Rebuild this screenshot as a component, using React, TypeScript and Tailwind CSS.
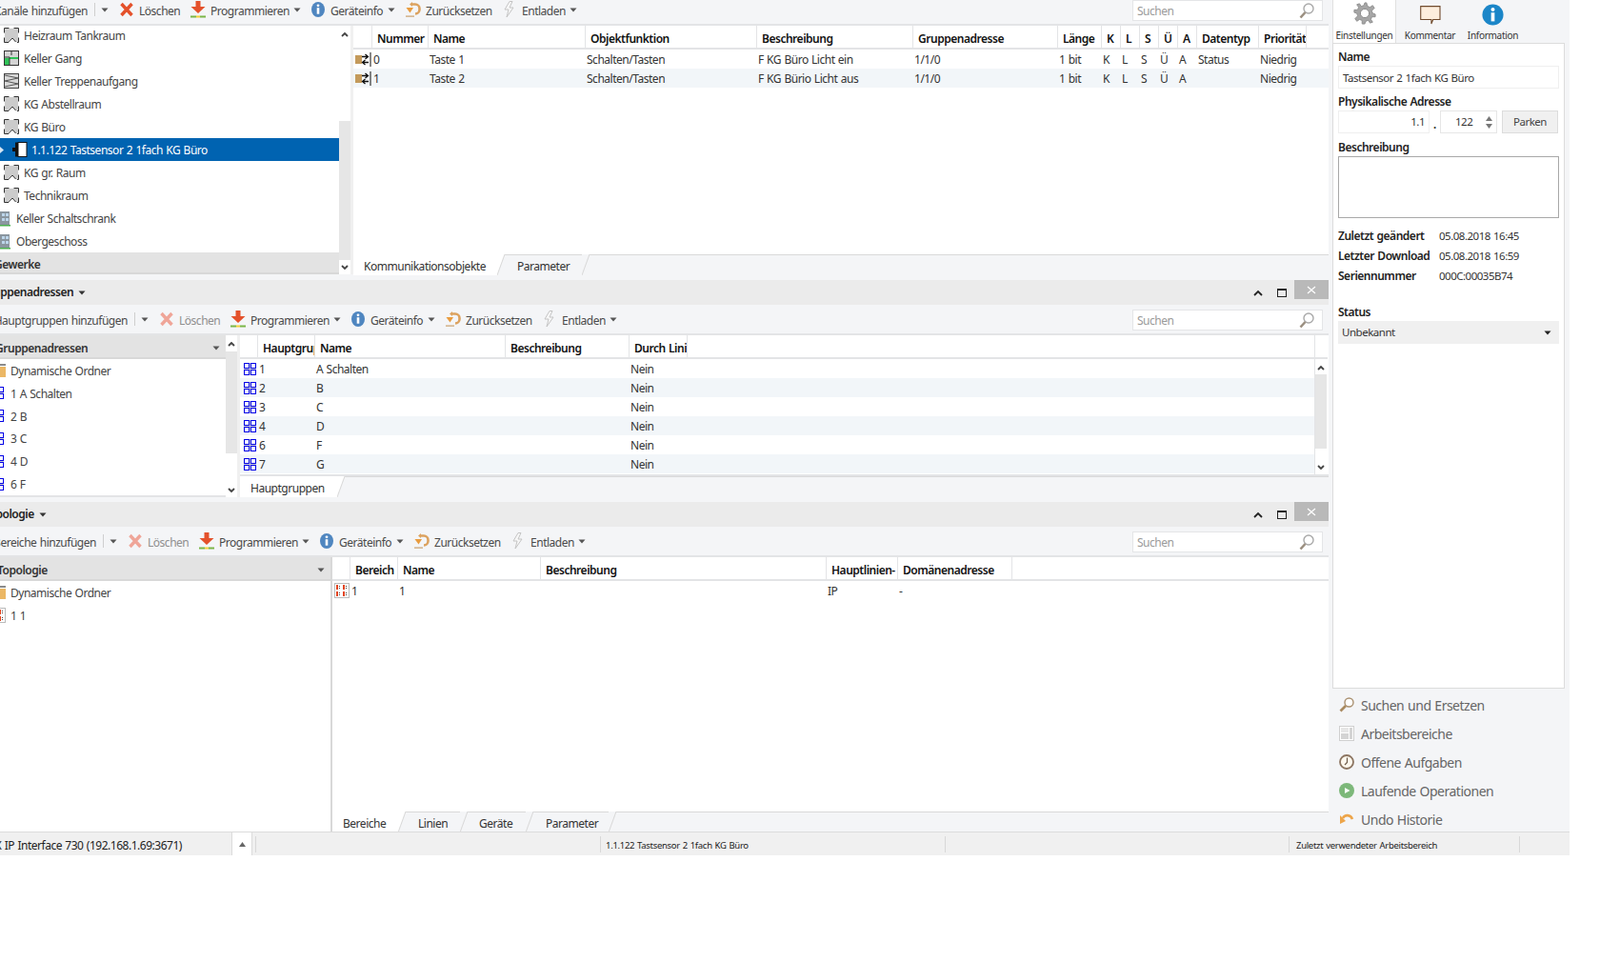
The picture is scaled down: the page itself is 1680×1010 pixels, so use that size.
import React from "react";

const Caret = ({ c = "#555" }: { c?: string }) => (
  <svg width="8" height="5" viewBox="0 0 8 5" className="shrink-0"><polygon points="0.5,0.5 7.5,0.5 4,4.5" fill={c} /></svg>
);
const Chev = ({ up }: { up?: boolean }) => (
  <svg width="8" height="6" viewBox="0 0 8 6" className="shrink-0">
    <polyline points={up ? "1,5 4,2 7,5" : "1,1 4,4 7,1"} fill="none" stroke="#444" strokeWidth="1.8" />
  </svg>
);
const XIcon = ({ c }: { c: string }) => (
  <svg width="14" height="16" viewBox="0 0 14 16"><path d="M1.5 2 L12.5 14 M12.5 2 L1.5 14" stroke={c} strokeWidth="3.4" /></svg>
);
const ProgIcon = () => (
  <svg width="16" height="19" viewBox="0 0 16 19">
    <path d="M5.5 0h5v6h5l-7.500 7-7.500-7h5z" fill="#e4512b" />
    <rect x="0" y="15.500" width="6" height="2" fill="#7ab648" />
    <rect x="6" y="15.500" width="4" height="2" fill="#f2d13c" />
    <rect x="10" y="15.500" width="6" height="2" fill="#7ab648" />
  </svg>
);
const InfoIcon = () => (
  <svg width="14" height="16" viewBox="0 0 14 16">
    <ellipse cx="7" cy="8" rx="7" ry="8" fill="#4f86c0" />
    <circle cx="7" cy="3.800" r="1.400" fill="#fff" />
    <rect x="5.700" y="6.200" width="2.600" height="6.500" fill="#fff" />
  </svg>
);
const ResetIcon = () => (
  <svg width="16" height="18" viewBox="0 0 16 18">
    <path d="M6 3.500h4a4.500 4.500 0 0 1 4.500 4.500v1a4.500 4.500 0 0 1-4.500 4.500" fill="none" stroke="#dca25f" strokeWidth="2.600" />
    <path d="M0.500 7h7.500l-3.500 5.500z" fill="#e99c3f" />
    <path d="M7 1l-3 2.500 3 2.500z" fill="#dca25f" />
    <rect x="0" y="15.500" width="9" height="1.200" fill="#c9a06c" />
  </svg>
);
const BoltIcon = () => (
  <svg width="11" height="18" viewBox="0 0 11 18"><path d="M6 0.500 L1 9 H5 L3 17 L10 7 H6 L9 0.500 Z" fill="#f7f7f7" stroke="#c4c4c4" /></svg>
);
const SearchIcon = () => (
  <svg width="16" height="17" viewBox="0 0 16 17">
    <circle cx="10" cy="6" r="5" fill="#fff" stroke="#a9a9a9" strokeWidth="1.400" />
    <path d="M6.500 10 L1.500 15.500" stroke="#9b8f80" strokeWidth="2.600" />
  </svg>
);
const Room = () => (
  <svg width="16" height="16" viewBox="0 0 16 16">
    <rect x="1" y="1" width="14" height="14" fill="#cbcbcb" />
    <path d="M0.500 5.500V0.500H5.500 M10.500 0.500H15.500V5.500 M15.500 10.500V15.500H14 M0.500 10.500V15.500H5 L9 11 L12.500 15" fill="none" stroke="#333" />
    <path d="M5.500 15.500 L9 11.800 L12 15.500Z" fill="#fff" />
  </svg>
);
const RoomGreen = () => (
  <svg width="16" height="16" viewBox="0 0 16 16">
    <rect x="0.500" y="0.500" width="15" height="15" fill="#d4d4d4" stroke="#333" />
    <rect x="1" y="8" width="5" height="7" fill="#2fc257" />
    <rect x="6" y="7" width="9" height="2" fill="#2fc257" />
    <path d="M8 0.500V5 M0.500 7H6 M6 7V15" stroke="#333" fill="none" />
  </svg>
);
const RoomStairs = () => (
  <svg width="16" height="16" viewBox="0 0 16 16">
    <rect x="0.500" y="0.500" width="15" height="15" fill="#d8d8d8" stroke="#444" />
    <path d="M1 2 L15 5 L1 8 L15 11 L1 14" fill="none" stroke="#555" />
  </svg>
);
const Device = () => (
  <svg width="16" height="16" viewBox="0 0 16 16">
    <rect x="0" y="6" width="3" height="4" fill="#111" />
    <rect x="3" y="0.500" width="6" height="15" fill="#111" />
    <rect x="6" y="0.500" width="9" height="15" fill="#fff" stroke="#111" />
  </svg>
);
const Building = () => (
  <svg width="11" height="17" viewBox="0 0 11 17" className="shrink-0">
    <rect x="0" y="1" width="10" height="14" fill="#8a969f" />
    <rect x="2" y="3" width="3" height="3" fill="#bcd5ea" />
    <rect x="6" y="3" width="3" height="3" fill="#bcd5ea" />
    <rect x="2" y="8" width="3" height="3" fill="#bcd5ea" />
    <rect x="6" y="8" width="3" height="3" fill="#bcd5ea" />
    <rect x="0" y="15" width="11" height="1.500" fill="#4caf50" />
  </svg>
);
const GroupIcon = () => (
  <svg width="13" height="13" viewBox="0 0 13 13" className="shrink-0">
    <rect width="13" height="13" fill="#c9ccd6" />
    <rect x="0.500" y="0.500" width="5" height="5" fill="#fff" stroke="#0000e6" />
    <rect x="7.500" y="0.500" width="5" height="5" fill="#fff" stroke="#0000e6" />
    <rect x="0.500" y="7.500" width="5" height="5" fill="#fff" stroke="#0000e6" />
    <rect x="7.500" y="7.500" width="5" height="5" fill="#fff" stroke="#0000e6" />
  </svg>
);
const AreaIcon = () => (
  <svg width="16" height="16" viewBox="0 0 16 16" className="shrink-0">
    <rect x="0.500" y="0.500" width="15" height="15" fill="#fff" stroke="#bbb" />
    <rect x="2" y="2" width="2" height="5" fill="#e2431c" /><rect x="5" y="3" width="1" height="1" fill="#444" /><rect x="5" y="5" width="1" height="1" fill="#444" />
    <rect x="9" y="2" width="2" height="5" fill="#e2431c" /><rect x="12" y="3" width="1" height="1" fill="#444" /><rect x="12" y="5" width="1" height="1" fill="#444" />
    <rect x="2" y="9" width="2" height="5" fill="#e2431c" /><rect x="5" y="10" width="1" height="1" fill="#444" /><rect x="5" y="12" width="1" height="1" fill="#444" />
    <rect x="9" y="9" width="2" height="5" fill="#e2431c" /><rect x="12" y="10" width="1" height="1" fill="#444" /><rect x="12" y="12" width="1" height="1" fill="#444" />
  </svg>
);
const Folder = () => (
  <svg width="6" height="14" viewBox="0 0 6 14" className="shrink-0">
    <rect x="0" y="0" width="6" height="2" fill="#8a8a8a" />
    <rect x="0" y="3" width="6" height="11" fill="#ebb765" />
  </svg>
);
const ObjIcon = () => (
  <svg width="17" height="15" viewBox="0 0 17 15" className="shrink-0">
    <rect x="0" y="3" width="7" height="9" fill="#c49a5b" />
    <path d="M7 4.500H13 M10.500 2L13.500 4.500L10.500 7" fill="none" stroke="#111" strokeWidth="1.300" />
    <path d="M14 10.500H8 M10.500 8L7.500 10.500L10.500 13" fill="none" stroke="#111" strokeWidth="1.300" />
    <rect x="15.500" y="0" width="1" height="15" fill="#111" />
  </svg>
);

const Toolbar = ({ label, labelClass, del }: { label: string; labelClass: string; del: string }) => (
  <div className="flex h-[32px] shrink-0 items-center border-b-2 border-[#e3e4e6] pt-[3px] text-[#4a4a4a]">
    <div className={`flex shrink-0 justify-end whitespace-nowrap pr-[7px] ${labelClass}`}>{label}</div>
    <div className="-mt-[3px] h-[14px] w-px shrink-0 bg-[#cfcfcf]" />
    <div className="-mt-[3px] flex w-[26px] shrink-0 pl-[6px]"><Caret /></div>
    <div className="flex w-[74px] shrink-0 items-center">
      <span className="-mt-[3px] flex"><XIcon c={del} /></span>
      <span className={`ml-[6px] ${del === "#e4512b" ? "" : "text-[#8f8f8f]"}`}>Löschen</span>
    </div>
    <div className="flex w-[127px] shrink-0 items-center">
      <span className="-mt-[3px] flex"><ProgIcon /></span>
      <span className="ml-[5px] w-[87px] whitespace-nowrap">Programmieren</span>
      <span className="-mt-[3px] flex"><Caret /></span>
    </div>
    <div className="flex w-[99px] shrink-0 items-center">
      <span className="-mt-[3px] flex"><InfoIcon /></span>
      <span className="ml-[6px] w-[60px] whitespace-nowrap">Geräteinfo</span>
      <span className="-mt-[3px] flex"><Caret /></span>
    </div>
    <div className="flex w-[103px] shrink-0 items-center">
      <span className="-mt-[3px] flex"><ResetIcon /></span>
      <span className="ml-[5px] whitespace-nowrap">Zurücksetzen</span>
    </div>
    <div className="flex w-[90px] shrink-0 items-center">
      <span className="-mt-[3px] flex"><BoltIcon /></span>
      <span className="ml-[8px] w-[50px] whitespace-nowrap">Entladen</span>
      <span className="-mt-[3px] flex"><Caret /></span>
    </div>
    <div className="flex-1" />
    <div className="-mt-[1px] mr-[6px] flex h-[22px] w-[200px] items-center justify-between border border-[#e4e5e7] bg-white pl-[4px] pr-[8px] text-[#9a9a9a]">
      <span className="pt-px">Suchen</span>
      <SearchIcon />
    </div>
  </div>
);

const SectionHead = ({ title, titleClass }: { title: string; titleClass: string }) => (
  <div className="flex h-[26px] shrink-0 items-center bg-[#ebebeb]">
    <span className={`whitespace-nowrap font-semibold text-[#222] ${titleClass}`}>{title}</span>
    <span className="ml-[5px]"><Caret c="#333" /></span>
    <div className="flex-1" />
    <svg width="10" height="7" viewBox="0 0 10 7" className="mr-[15px]"><polyline points="1,6 5,2 9,6" fill="none" stroke="#222" strokeWidth="1.800" /></svg>
    <div className="mr-[8px] h-[9px] w-[10px] border border-t-2 border-[#222]" />
    <div className="flex h-[20px] w-[36px] items-center justify-center self-start bg-[#b9b9b9]">
      <svg width="10" height="9" viewBox="0 0 10 9"><path d="M1 1L9 8M9 1L1 8" stroke="#fff" strokeWidth="1.200" /></svg>
    </div>
  </div>
);

const Scrollbar = ({ top, thumb }: { top: string; thumb: string }) => (
  <div className="flex h-full w-[12px] shrink-0 flex-col bg-white">
    <div className={`flex justify-center pt-[6px] ${top}`}><Chev up /></div>
    <div className={`bg-[#e6e6e6] ${thumb}`} />
    <div className="flex flex-1 items-end justify-center pb-[4px]"><Chev /></div>
  </div>
);

const Slant = ({ active }: { active?: boolean }) => (
  <svg width="8" height="21" viewBox="0 0 8 21" preserveAspectRatio="none" className="h-full shrink-0">
    {active && <polygon points="0,0 8,0 0,21" fill="#fff" />}
    <line x1="0" y1="21" x2="8" y2="0" stroke="#d9d9d9" />
  </svg>
);

const TabBar = ({ items }: { items: { label: string; cls: string }[] }) => (
  <div className="flex flex-1 text-[#333]">
    {items.map((t, i) => (
      <React.Fragment key={t.label}>
        <div className={`flex items-center whitespace-nowrap pt-[3px] ${t.cls} ${i === 0 ? "bg-white" : "border-t border-[#d9d9d9]"}`}>{t.label}</div>
        <Slant active={i === 0} />
      </React.Fragment>
    ))}
    <div className="flex-1 border-t border-[#d9d9d9]" />
  </div>
);

const Head = ({ cols, labels }: { cols: string; labels: string[] }) => (
  <div className={`grid h-[25px] shrink-0 border-b-2 border-[#e3e4e6] bg-white font-semibold text-[#111] ${cols}`}>
    {labels.map((l, i) => (
      <div key={i} className="flex items-center overflow-hidden whitespace-nowrap border-r border-[#e3e4e6] pl-[5px] pt-[4px]">{l}</div>
    ))}
    <div />
  </div>
);

const Row = ({ cols, cells, odd, icon, iconClass }: { cols: string; cells: string[]; odd: boolean; icon: React.ReactNode; iconClass: string }) => (
  <div className={`grid h-[20px] items-center text-[#333] ${cols} ${odd ? "bg-[#f2f6f9]" : "bg-white"}`}>
    <div className={`flex ${iconClass}`}>{icon}</div>
    {cells.map((c, i) => (
      <div key={i} className="h-[20px] overflow-hidden whitespace-nowrap pl-px pt-[2px]">{c}</div>
    ))}
  </div>
);

const TreeRow = ({ icon, label, textClass }: { icon: React.ReactNode; label: string; textClass: string }) => (
  <div className="flex h-[24px] items-center text-[#444]">
    {icon}
    <span className={`whitespace-nowrap pt-[2px] ${textClass}`}>{label}</span>
  </div>
);

const cols1 = "grid-cols-[20px_59px_165px_180px_164px_152px_46px_20px_20px_20px_20px_20px_65px_50px_1fr]";
const cols2 = "grid-cols-[19px_60px_200px_130px_61px_1fr]";
const cols3 = "grid-cols-[19px_50px_150px_300px_75px_120px_1fr]";

const Lbl = ({ children }: { children: React.ReactNode }) => (
  <div className="flex h-[16px] items-center font-semibold text-[#222]">{children}</div>
);

const Info = ({ k, v }: { k: string; v: string }) => (
  <div className="flex h-[21px] items-center">
    <span className="w-[105px] shrink-0 whitespace-nowrap font-semibold text-[#222]">{k}</span>
    <span className="pl-px text-[11.500px] tracking-[-0.5px] text-[#333]">{v}</span>
  </div>
);

const SideItem = ({ icon, label }: { icon: React.ReactNode; label: string }) => (
  <div className="flex h-[30px] shrink-0 items-center text-[14px] tracking-[-0.5px] text-[#666]">
    <span className="flex w-[23px] shrink-0">{icon}</span>
    <span className="whitespace-nowrap">{label}</span>
  </div>
);

export default function App() {
  return (
    <div className="h-[1010px] w-[1680px] overflow-hidden bg-white font-['Open_Sans',sans-serif] text-[12px] tracking-[-0.48px] [word-spacing:0.7px]">
      <div className="flex h-[898px] w-[1648px] flex-col overflow-hidden bg-[#f4f5f7]">
        <div className="flex h-[873px] shrink-0">
          {/* left */}
          <div className="flex h-full w-[1395px] shrink-0 flex-col">
            {/* section 1 */}
            <div className="-mt-[5px]">
              <Toolbar label="Kanäle hinzufügen" labelClass="w-[99px]" del="#e4512b" />
            </div>
            <div className="flex h-[261px] shrink-0">
              <div className="flex h-full w-[356px] shrink-0 flex-col overflow-hidden bg-white">
                <div className="-mt-[2px] flex-1">
                  <TreeRow icon={<span className="ml-[4px] flex"><Room /></span>} label="Heizraum Tankraum" textClass="ml-[5px]" />
                  <TreeRow icon={<span className="ml-[4px] flex"><RoomGreen /></span>} label="Keller Gang" textClass="ml-[5px]" />
                  <TreeRow icon={<span className="ml-[4px] flex"><RoomStairs /></span>} label="Keller Treppenaufgang" textClass="ml-[5px]" />
                  <TreeRow icon={<span className="ml-[4px] flex"><Room /></span>} label="KG Abstellraum" textClass="ml-[5px]" />
                  <TreeRow icon={<span className="ml-[4px] flex"><Room /></span>} label="KG Büro" textClass="ml-[5px]" />
                  <div className="flex h-[24px] items-center bg-[#0063b1] text-white">
                    <svg width="4" height="7" viewBox="0 0 4 7" className="shrink-0"><polygon points="0,0 4,3.500 0,7" fill="#d6e6f3" /></svg>
                    <span className="ml-[9px] flex"><Device /></span>
                    <span className="ml-[4px] whitespace-nowrap pt-[2px]">1.1.122 Tastsensor 2 1fach KG Büro</span>
                  </div>
                  <TreeRow icon={<span className="ml-[4px] flex"><Room /></span>} label="KG gr. Raum" textClass="ml-[5px]" />
                  <TreeRow icon={<span className="ml-[4px] flex"><Room /></span>} label="Technikraum" textClass="ml-[5px]" />
                  <TreeRow icon={<Building />} label="Keller Schaltschrank" textClass="ml-[6px]" />
                  <TreeRow icon={<Building />} label="Obergeschoss" textClass="ml-[6px]" />
                </div>
                <div className="flex h-[23px] shrink-0 items-center justify-end border-b-2 border-[#d8d8d8] bg-[#e3e3e3] pt-[4px] font-semibold text-[#333]">
                  <span className="mr-auto -ml-[6px] whitespace-nowrap">Gewerke</span>
                </div>
              </div>
              <Scrollbar top="h-[100px]" thumb="h-[146px]" />
              <div className="w-[3px] shrink-0 bg-[#f0f0f0]" />
              <div className="flex min-w-0 flex-1 flex-col">
                <div className="flex h-[240px] shrink-0 flex-col bg-white">
                  <Head cols={cols1} labels={["", "Nummer", "Name", "Objektfunktion", "Beschreibung", "Gruppenadresse", "Länge", "K", "L", "S", "Ü", "A", "Datentyp", "Priorität"]} />
                  <Row cols={cols1} odd={false} iconClass="pl-[2px]" icon={<ObjIcon />} cells={["0", "Taste 1", "Schalten/Tasten", "F KG Büro Licht ein", "1/1/0", "1 bit", "K", "L", "S", "Ü", "A", "Status", "Niedrig"]} />
                  <Row cols={cols1} odd iconClass="pl-[2px]" icon={<ObjIcon />} cells={["1", "Taste 2", "Schalten/Tasten", "F KG Bürio Licht aus", "1/1/0", "1 bit", "K", "L", "S", "Ü", "A", "", "Niedrig"]} />
                </div>
                <TabBar items={[{ label: "Kommunikationsobjekte", cls: "w-[151px] pl-[11px]" }, { label: "Parameter", cls: "w-[81px] pl-[13px]" }]} />
              </div>
            </div>

            {/* section 2 */}
            <div className="mt-[6px]">
              <SectionHead title="Gruppenadressen" titleClass="-ml-[20px]" />
            </div>
            <Toolbar label="Hauptgruppen hinzufügen" labelClass="w-[141px]" del="#efa598" />
            <div className="flex h-[170px] shrink-0">
              <div className="flex h-full w-[237px] shrink-0 flex-col overflow-hidden border-b-2 border-[#e3e4e6] bg-white">
                <div className="flex h-[25px] shrink-0 items-center justify-between border-b-2 border-[#d8d8d8] bg-[#e3e3e3] pr-[6px] pt-[4px] font-semibold text-[#333]">
                  <span className="-ml-[5px]">Gruppenadressen</span><Caret />
                </div>
                <TreeRow icon={<Folder />} label="Dynamische Ordner" textClass="ml-[5px]" />
                {["1 A Schalten", "2 B", "3 C", "4 D", "6 F"].map((t) => (
                  <TreeRow key={t} icon={<span className="-ml-[9px] flex"><GroupIcon /></span>} label={t} textClass="ml-[7px]" />
                ))}
              </div>
              <Scrollbar top="h-[17px]" thumb="h-[107px]" />
              <div className="w-[3px] shrink-0 bg-[#f0f0f0]" />
              <div className="flex min-w-0 flex-1 flex-col">
                <div className="flex h-[148px] shrink-0 border-b-2 border-[#e3e4e6] bg-white">
                  <div className="flex w-[1128px] shrink-0 flex-col">
                    <Head cols={cols2} labels={["", "Hauptgruppe", "Name", "Beschreibung", "Durch Linie"]} />
                    {[["1", "A Schalten"], ["2", "B"], ["3", "C"], ["4", "D"], ["6", "F"], ["7", "G"]].map(([n, name], i) => (
                      <Row key={n} cols={cols2} odd={i % 2 === 1} iconClass="pl-[4px]" icon={<GroupIcon />} cells={[n, name, "", "Nein"]} />
                    ))}
                  </div>
                  <div className="flex w-[14px] shrink-0 flex-col border-l border-[#e3e4e6]">
                    <div className="h-[25px] shrink-0 border-b-2 border-[#e3e4e6]" />
                    <div className="min-h-0 flex-1">
                      <Scrollbar top="h-[16px]" thumb="h-[78px]" />
                    </div>
                  </div>
                </div>
                <TabBar items={[{ label: "Hauptgruppen", cls: "w-[102px] pl-[11px]" }]} />
              </div>
            </div>

            {/* section 3 */}
            <div className="mt-[5px]">
              <SectionHead title="Topologie" titleClass="-ml-[17px]" />
            </div>
            <Toolbar label="Bereiche hinzufügen" labelClass="w-[108px]" del="#efa598" />
            <div className="flex min-h-0 flex-1">
              <div className="flex h-full w-[347px] shrink-0 flex-col overflow-hidden bg-white">
                <div className="flex h-[25px] shrink-0 items-center justify-between border-b-2 border-[#d8d8d8] bg-[#e3e3e3] pr-[6px] pt-[4px] font-semibold text-[#333]">
                  <span className="-ml-[3px]">Topologie</span><Caret />
                </div>
                <TreeRow icon={<Folder />} label="Dynamische Ordner" textClass="ml-[5px]" />
                <TreeRow icon={<span className="-ml-[10px] flex"><AreaIcon /></span>} label="1 1" textClass="ml-[5px]" />
              </div>
              <div className="w-[2px] shrink-0 bg-[#d8d8d8]" />
              <div className="flex min-w-0 flex-1 flex-col">
                <div className="flex h-[267px] shrink-0 flex-col bg-white">
                  <Head cols={cols3} labels={["", "Bereich", "Name", "Beschreibung", "Hauptlinien-", "Domänenadresse"]} />
                  <Row cols={cols3} odd={false} iconClass="pl-[2px]" icon={<AreaIcon />} cells={["1", "1", "", "IP", "-"]} />
                </div>
                <TabBar items={[{ label: "Bereiche", cls: "w-[69px] pl-[11px]" }, { label: "Linien", cls: "w-[57px] pl-[13px]" }, { label: "Geräte", cls: "w-[61px] pl-[12px]" }, { label: "Parameter", cls: "w-[79px] pl-[13px]" }]} />
              </div>
            </div>
          </div>

          {/* right */}
          <div className="flex h-full w-[253px] shrink-0 flex-col pl-[4px] pr-[5px]">
            <div className="flex h-[45px] shrink-0 items-stretch text-[10px] tracking-[-0.3px] text-[#333]">
              <div className="flex w-[67px] flex-col items-center border-l border-r border-[#e0e0e0] bg-white pt-[2px]">
                <svg width="26" height="26" viewBox="0 0 26 26">
                  <path d="M13 1 L15 1 L16 5 L19 6 L22 4 L24 7 L21 10 L22 13 L25 14 L25 17 L21 17 L20 20 L22 23 L19 24 L17 21 L14 22 L13 25 L10 25 L10 21 L7 20 L4 22 L2 19 L5 16 L4 13 L1 12 L1 9 L5 9 L6 6 L4 3 L7 2 L9 5 L12 4 Z" fill="#a6a6a6" stroke="#8d8d8d" />
                  <circle cx="13" cy="13" r="5" fill="#fff" stroke="#888" />
                </svg>
                <span className="mt-[4px] whitespace-nowrap">Einstellungen</span>
              </div>
              <div className="flex w-[71px] flex-col items-center pt-[6px]">
                <svg width="24" height="22" viewBox="0 0 24 22"><path d="M0.700 0.700H23V16H15L13 21V16H0.700Z" fill="#fdeedd" stroke="#6f4a2c" strokeWidth="1.200" /></svg>
                <span className="mt-[4px] whitespace-nowrap">Kommentar</span>
              </div>
              <div className="flex w-[61px] flex-col items-center pt-[4px]">
                <svg width="25" height="25" viewBox="0 0 25 25">
                  <circle cx="12.500" cy="12.500" r="12" fill="#1b86c8" />
                  <circle cx="12.500" cy="6.500" r="2.200" fill="#fff" />
                  <rect x="10.500" y="10" width="4" height="10" fill="#fff" />
                </svg>
                <span className="mt-[3px] whitespace-nowrap">Information</span>
              </div>
            </div>
            <div className="h-[678px] shrink-0 border border-[#dcdcdc] bg-white pl-[5px] pr-[5px] pt-[6px] text-[#333]">
              <Lbl>Name</Lbl>
              <div className="mt-px flex h-[24px] items-center border border-[#efefef] pl-[4px] pt-[2px] text-[11.500px]">Tastsensor 2 1fach KG Büro</div>
              <div className="mt-[6px]"><Lbl>Physikalische Adresse</Lbl></div>
              <div className="mt-px flex h-[24px] text-[11.500px]">
                <div className="flex w-[96px] items-center justify-end border border-[#efefef] pr-[4px]">1.1</div>
                <div className="flex w-[11px] items-end justify-center pb-[1px] font-bold">.</div>
                <div className="flex w-[60px] items-center border border-[#e6e6e6] pl-[15px]">
                  <span className="w-[32px]">122</span>
                  <div className="flex flex-col gap-[3px]">
                    <svg width="7" height="5" viewBox="0 0 7 5"><polygon points="3.500,0 7,5 0,5" fill="#777" /></svg>
                    <svg width="7" height="5" viewBox="0 0 7 5"><polygon points="0,0 7,0 3.500,5" fill="#777" /></svg>
                  </div>
                </div>
                <div className="ml-[5px] flex w-[59px] items-center justify-center border border-[#dcdcdc] bg-[#f0f0f0] text-[#444]">Parken</div>
              </div>
              <div className="mt-[7px]"><Lbl>Beschreibung</Lbl></div>
              <div className="mt-px h-[65px] border border-[#a8a8a8]" />
              <div className="mt-[8px]">
                <Info k="Zuletzt geändert" v="05.08.2018 16:45" />
                <Info k="Letzter Download" v="05.08.2018 16:59" />
                <Info k="Seriennummer" v="000C:00035B74" />
              </div>
              <div className="mt-[20px]"><Lbl>Status</Lbl></div>
              <div className="mt-px flex h-[24px] items-center justify-between bg-[#f0f0f0] pl-[4px] pr-[8px] text-[11.500px]">
                <span>Unbekannt</span><Caret c="#222" />
              </div>
            </div>
            <div className="mt-[2px] flex flex-col pl-[7px]">
              <SideItem label="Suchen und Ersetzen" icon={<svg width="16" height="16" viewBox="0 0 16 16"><circle cx="10.500" cy="5.500" r="4.500" fill="#fff" stroke="#a99070" strokeWidth="1.400" /><path d="M7 9L1.500 14.500" stroke="#a98a60" strokeWidth="2.600" /></svg>} />
              <SideItem label="Arbeitsbereiche" icon={<svg width="16" height="16" viewBox="0 0 16 16"><rect x="0.500" y="0.500" width="15" height="15" fill="#fff" stroke="#cfcfcf" /><rect x="2" y="2" width="8" height="5" fill="#e6e6e6" /><rect x="2" y="8" width="8" height="6" fill="#d4d4d4" /><rect x="11" y="2" width="3" height="12" fill="#d4d4d4" /></svg>} />
              <SideItem label="Offene Aufgaben" icon={<svg width="16" height="16" viewBox="0 0 16 16"><circle cx="8" cy="8" r="7" fill="#fdf8ee" stroke="#8c7561" strokeWidth="1.800" /><path d="M8.500 3.500V8.500L6 11" fill="none" stroke="#6c5a4a" strokeWidth="1.200" /></svg>} />
              <SideItem label="Laufende Operationen" icon={<svg width="16" height="16" viewBox="0 0 16 16"><circle cx="8" cy="8" r="8" fill="#7db87a" /><polygon points="6,5 11.500,8 6,11" fill="#fff" /></svg>} />
              <SideItem label="Undo Historie" icon={<svg width="16" height="16" viewBox="0 0 16 16"><path d="M4 7C6 3 12 3 14 8" fill="none" stroke="#eda54a" strokeWidth="2.600" /><polygon points="1,4 7,10 1,13" fill="#eda54a" /></svg>} />
            </div>
          </div>
        </div>

        {/* status bar */}
        <div className="flex h-[25px] shrink-0 items-center border-t border-[#dcdcdc] bg-[#f0f0f0] text-[#222]">
          <div className="flex w-[191px] shrink-0 justify-end whitespace-nowrap pt-[3px]">KNX IP Interface 730 (192.168.1.69:3671)</div>
          <div className="ml-[52px] flex h-full w-[22px] shrink-0 items-center justify-center border-l border-r border-[#dcdcdc] bg-white">
            <svg width="7" height="5" viewBox="0 0 7 5"><polygon points="3.500,0 7,5 0,5" fill="#666" /></svg>
          </div>
          <div className="ml-[3px] h-[17px] w-px shrink-0 bg-[#d8d8d8]" />
          <div className="ml-[361px] h-[17px] w-px shrink-0 bg-[#d8d8d8]" />
          <span className="ml-[5px] w-[356px] shrink-0 whitespace-nowrap pt-[5px] text-[9.500px] tracking-[-0.3px]">1.1.122 Tastsensor 2 1fach KG Büro</span>
          <div className="h-[17px] w-px shrink-0 bg-[#d8d8d8]" />
          <div className="ml-[360px] h-[17px] w-px shrink-0 bg-[#d8d8d8]" />
          <span className="ml-[7px] w-[234px] shrink-0 whitespace-nowrap pt-[5px] text-[9.500px] tracking-[-0.3px]">Zuletzt verwendeter Arbeitsbereich</span>
          <div className="h-[17px] w-px shrink-0 bg-[#d8d8d8]" />
        </div>
      </div>
    </div>
  );
}
